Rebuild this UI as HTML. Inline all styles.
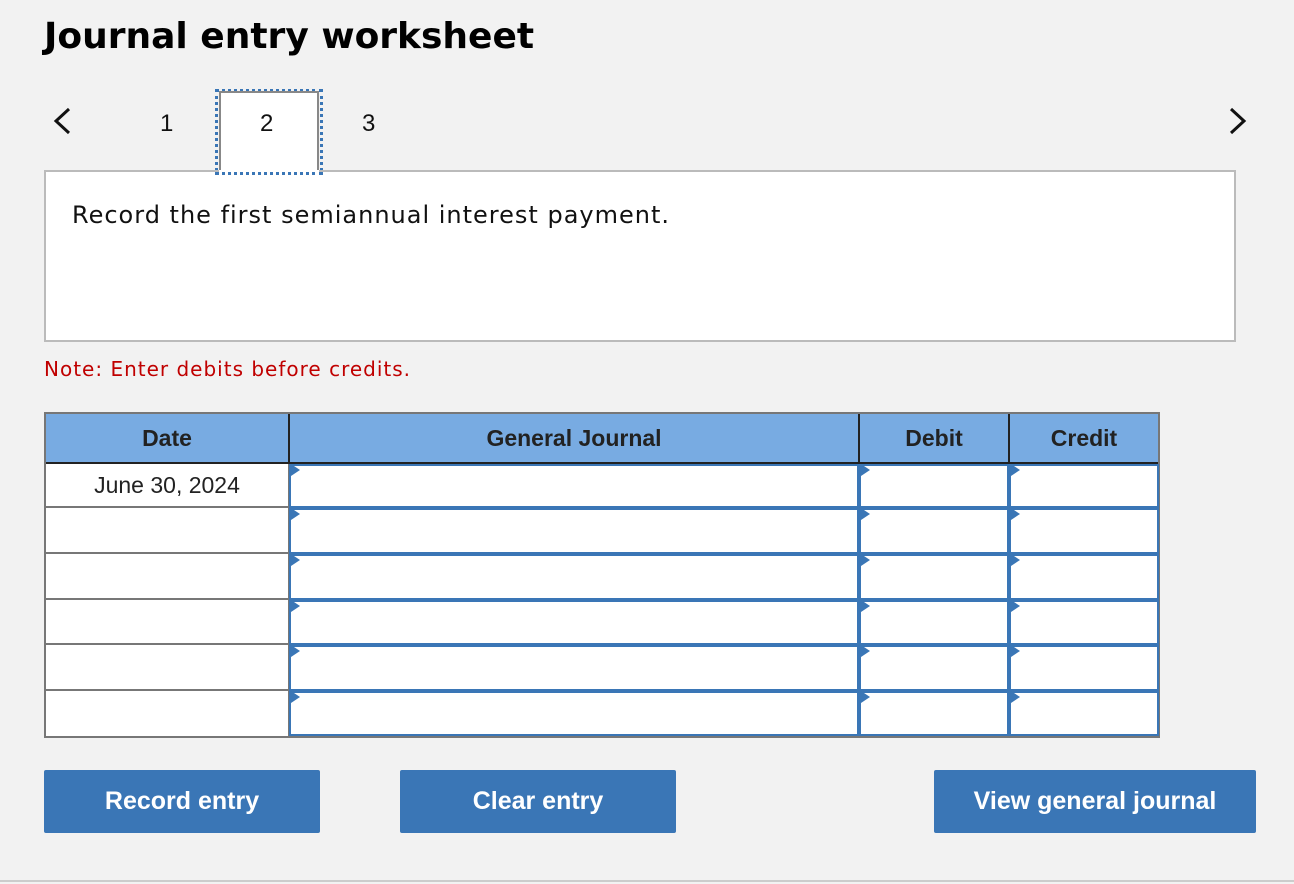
<!DOCTYPE html><html><head><style>
body{margin:0;width:1294px;height:884px;background:#f2f2f2;font-family:"Liberation Sans",Arial,sans-serif;position:relative;overflow:hidden}
.a{position:absolute}
h1{position:absolute;left:44px;top:16px;margin:0;font-family:"DejaVu Sans",sans-serif;font-size:36px;font-weight:bold;color:#000}
.n{position:absolute;top:110px;font-size:24px;color:#111}
.btn{position:absolute;top:770px;height:63px;background:#3a76b6;color:#fff;font-weight:bold;font-size:25px;display:flex;align-items:center;justify-content:center;border-radius:2px}
.cell{position:absolute;background:#fff;box-sizing:border-box}
.tri{position:absolute;width:0;height:0;border-top:6px solid transparent;border-bottom:6px solid transparent;border-left:9px solid #3a76b6}
.hd{position:absolute;top:414px;height:48px;display:flex;align-items:center;justify-content:center;font-weight:bold;font-size:23px;color:#222}
</style></head><body>
<h1>Journal entry worksheet</h1>
<svg class="a" style="left:50px;top:106px" width="24" height="30"><path d="M19 3 L6 15 L19 27" stroke="#111" stroke-width="3" fill="none"/></svg>
<svg class="a" style="left:1226px;top:106px" width="24" height="30"><path d="M5 3 L18 15 L5 27" stroke="#111" stroke-width="3" fill="none"/></svg>
<div class="n" style="left:160px">1</div>
<div class="a" style="left:215px;top:89px;width:108px;height:88px;border:3px dotted #3a76b6;box-sizing:border-box"></div>
<div class="a" style="left:219px;top:91px;width:100px;height:86px;background:#fff;border:2px solid #888;border-bottom:none;box-sizing:border-box"></div>
<div class="n" style="left:260px">2</div>
<div class="n" style="left:362px">3</div>
<div class="a" style="left:44px;top:170px;width:1192px;height:172px;background:#fff;border:2px solid #bbb;box-sizing:border-box"></div>
<div class="a" style="left:219px;top:170px;width:100px;height:4px;background:#fff"></div>
<div class="a" style="left:215px;top:172px;width:108px;height:0;border-top:3px dotted #3a76b6"></div>
<div class="a" style="left:72px;top:201px;font-family:'DejaVu Sans',sans-serif;font-size:24px;letter-spacing:1px;color:#111">Record the first semiannual interest payment.</div>
<div class="a" style="left:44px;top:357px;font-family:'DejaVu Sans',sans-serif;font-size:20px;letter-spacing:1px;color:#c00000">Note: Enter debits before credits.</div>
<div class="a" style="left:44px;top:412px;width:1116px;height:326px;background:#777"></div>
<div class="a" style="left:46px;top:414px;width:1112px;height:48px;background:#78abe2"></div>
<div class="a" style="left:288px;top:414px;width:2px;height:48px;background:#222"></div>
<div class="a" style="left:858px;top:414px;width:2px;height:48px;background:#222"></div>
<div class="a" style="left:1008px;top:414px;width:2px;height:48px;background:#222"></div>
<div class="a" style="left:46px;top:462px;width:1112px;height:2px;background:#222"></div>
<div class="hd" style="left:46px;width:242px">Date</div>
<div class="hd" style="left:290px;width:568px">General Journal</div>
<div class="hd" style="left:860px;width:148px">Debit</div>
<div class="hd" style="left:1010px;width:148px">Credit</div>
<div id="rows"></div>
<script>
var b=[464,508,554,600,645,691,736],h='';
for(var i=0;i<6;i++){var t=b[i],hh=b[i+1]-b[i]-(i<5?2:0);
h+='<div class="cell" style="left:46px;top:'+t+'px;width:242px;height:'+hh+'px;font-size:23px;color:#222;text-align:center;line-height:'+hh+'px">'+(i==0?'June 30, 2024':'')+'</div>';
h+='<div class="cell" style="left:289px;top:'+t+'px;width:870px;height:'+(b[i+1]-b[i])+'px;background:#3a76b6"></div>';
[[291,566],[861,146],[1011,146]].forEach(function(c){h+='<div class="cell" style="left:'+c[0]+'px;top:'+(t+2)+'px;width:'+c[1]+'px;height:'+(b[i+1]-b[i]-4)+'px"></div><div class="tri" style="left:'+c[0]+'px;top:'+(t)+'px"></div>';});
}
document.getElementById('rows').innerHTML=h;
</script>
<div class="btn" style="left:44px;width:276px">Record entry</div>
<div class="btn" style="left:400px;width:276px">Clear entry</div>
<div class="btn" style="left:934px;width:322px">View general journal</div>
<div class="a" style="left:0;top:880px;width:1294px;height:2px;background:#ccc"></div>
</body></html>
